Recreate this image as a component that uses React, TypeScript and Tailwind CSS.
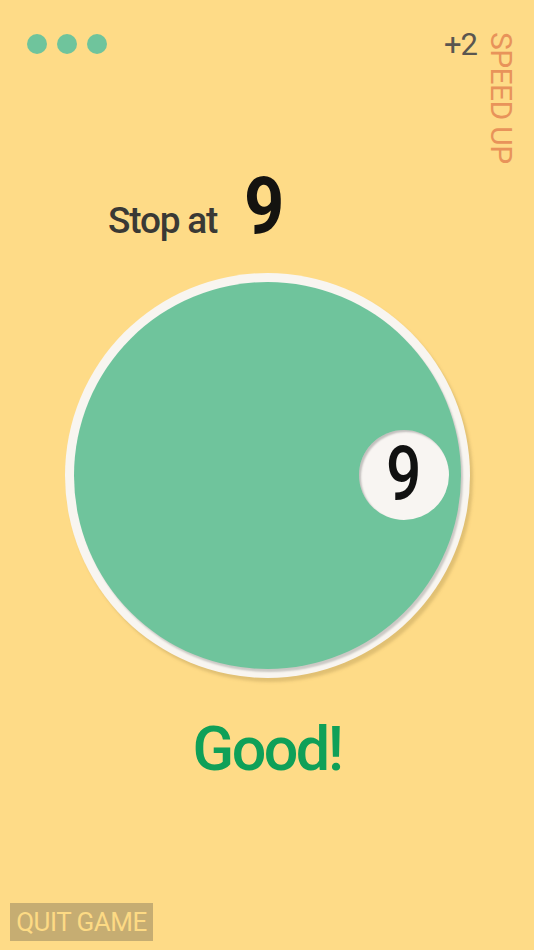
import React from 'react';

const font = { fontFamily: 'Roboto, "Liberation Sans", sans-serif' };

const App = () => {
  return (
    <div className="w-[534px] h-[950px] bg-[#fedb87] flex flex-col overflow-hidden" style={font}>
      {/* top bar */}
      <div className="flex justify-between items-start pl-[27px] pr-[18px] pt-[29px]">
        <div className="flex gap-[10px] mt-[5px]">
          <span className="w-[20px] h-[20px] rounded-full bg-[#6fc49c]" />
          <span className="w-[20px] h-[20px] rounded-full bg-[#6fc49c]" />
          <span className="w-[20px] h-[20px] rounded-full bg-[#6fc49c]" />
        </div>
        <div className="flex items-start gap-[9px]">
          <span className="text-[31px] leading-none text-[#5a5650] tracking-[-1px]">+2</span>
          <span className="text-[30px] leading-none text-[#e8935a] tracking-[-0.6px] [writing-mode:vertical-rl] mt-[3px]">
            SPEED UP
          </span>
        </div>
      </div>

      {/* target */}
      <div className="flex items-end gap-[27px] mt-[7px] h-[64px] pl-[108px]">
        <span className="text-[37px] leading-none font-medium text-[#3a3935] tracking-[-1.2px] mb-[-4px]">
          Stop at
        </span>
        <span className="inline-block text-[80px] leading-none font-bold text-[#141310] mb-[-11px] scale-x-[0.88] origin-left">
          9
        </span>
      </div>

      {/* dial */}
      <div className="mt-[38px] mx-auto w-[405px] h-[405px] rounded-full bg-[#f8f5f0] p-[9px] shadow-[3px_4px_3px_rgba(190,160,90,0.45)]">
        <div className="w-full h-full rounded-full bg-[#6fc49c] flex items-center justify-end pr-[12px] shadow-[2px_3px_2px_rgba(0,0,0,0.18)]">
          <div className="w-[90px] h-[90px] rounded-full bg-[#f8f5f2] flex items-center justify-center shadow-[inset_2px_2px_2px_rgba(0,0,0,0.22)]">
            <span className="inline-block text-[76px] leading-none font-medium text-[#111] mt-[-2px] scale-x-[0.82]">
              9
            </span>
          </div>
        </div>
      </div>

      {/* result */}
      <div className="mt-[41px] text-center text-[61px] leading-none font-medium text-[#0fa058] tracking-[-2.5px]">
        Good!
      </div>

      <div className="flex-1" />

      <div className="pl-[10px] pb-[9px]">
        <button className="w-[143px] h-[38px] bg-[#c6ad72] text-[#fdda84] text-[26px] leading-none flex items-center justify-center tracking-[-0.5px]">
          QUIT GAME
        </button>
      </div>
    </div>
  );
};

export default App;
